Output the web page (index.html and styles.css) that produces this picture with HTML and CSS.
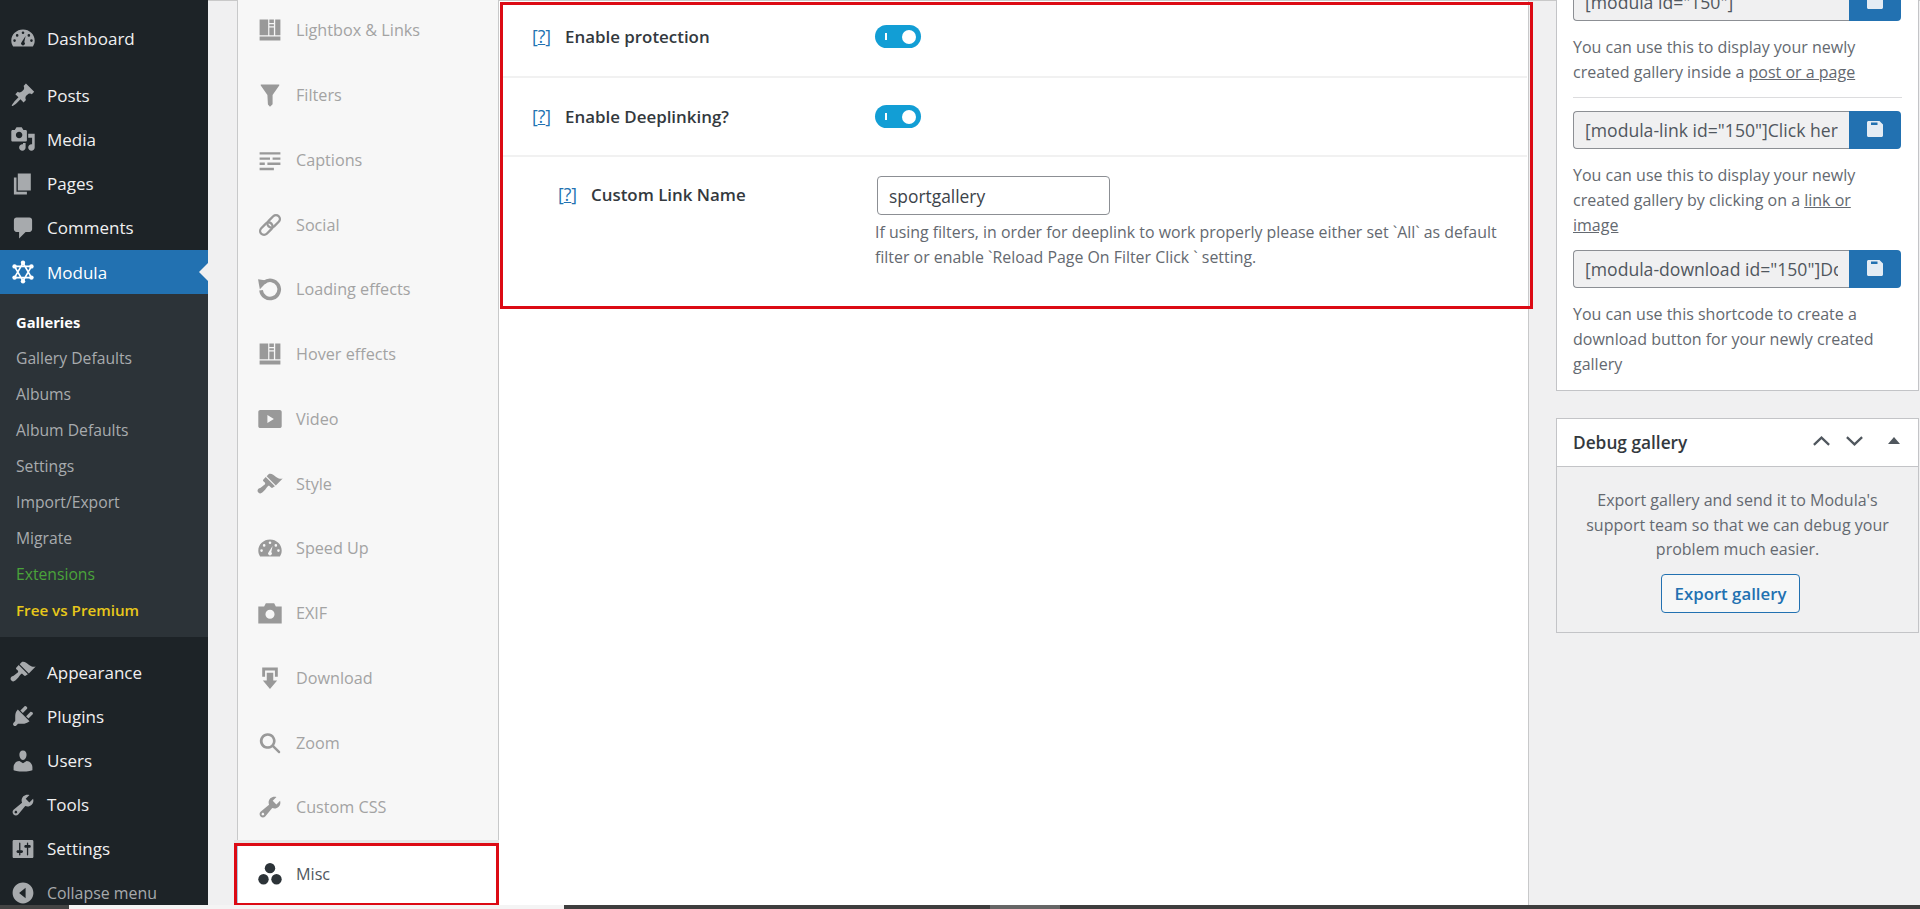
FILE: index.html
```html
<!DOCTYPE html>
<html lang="en">
<head>
  <meta charset="UTF-8">
  <title>Edit Gallery - Modula</title>
  <link rel="stylesheet" href="styles.css">
</head>
<body>
  <svg class="sprite" xmlns="http://www.w3.org/2000/svg">
    <symbol id="i-gauge" viewBox="0 0 20 20"><path fill-rule="evenodd" d="M10 3.500c-5 0-9 3.800-9 8.500 0 1.800.5 3.300 1.400 4.500h15.200c.9-1.200 1.400-2.700 1.400-4.500 0-4.700-4-8.500-9-8.500zM10 5a1 1 0 1 1 0 2 1 1 0 0 1 0-2zM5.500 7a1 1 0 1 1 0 2 1 1 0 0 1 0-2zm9 0a1 1 0 1 1 0 2 1 1 0 0 1 0-2zM3.500 11a1 1 0 1 1 0 2 1 1 0 0 1 0-2zm13 0a1 1 0 1 1 0 2 1 1 0 0 1 0-2zM12 8.500L11 13a1.500 1.500 0 1 1-2 0z"/></symbol>
    <symbol id="i-pin" viewBox="0 0 20 20"><path d="M10.440 3.020l1.820-1.820 6.360 6.350-1.830 1.820c-1.050-.68-2.480-.57-3.410.36l-.75.75c-.92.93-1.040 2.350-.35 3.410l-1.830 1.820-2.410-2.410-2.800 2.790c-.42.42-3.380 2.710-3.800 2.290s1.860-3.390 2.280-3.810l2.790-2.790L4.100 9.360l1.830-1.820c1.050.69 2.480.57 3.400-.36l.75-.75c.93-.92 1.050-2.350.36-3.410z"/></symbol>
    <symbol id="i-media" viewBox="0 0 20 20"><path fill-rule="evenodd" d="M13 11V4c0-.55-.45-1-1-1h-1.670L9 1H5L3.670 3H2c-.55 0-1 .45-1 1v7c0 .55.45 1 1 1h10c.55 0 1-.45 1-1zM7 4.500c1.380 0 2.500 1.120 2.500 2.500S8.380 9.500 7 9.500 4.500 8.380 4.500 7 5.620 4.500 7 4.500zM14 6h5v10.500c0 1.380-1.120 2.500-2.500 2.500S14 17.880 14 16.500s1.120-2.500 2.500-2.500c.17 0 .34.020.5.050V9h-3V6zm-4 8.050V13h2v3.500c0 1.380-1.120 2.500-2.500 2.500S7 17.880 7 16.500 8.120 14 9.500 14c.17 0 .34.020.5.050z"/></symbol>
    <symbol id="i-pages" viewBox="0 0 20 20"><path d="M6 15V2h10v13H6zm-1 1h8v2H3V5h2v11z"/></symbol>
    <symbol id="i-comment" viewBox="0 0 20 20"><path d="M5 2h10c1.100 0 2 .9 2 2v7c0 1.100-.9 2-2 2h-3l-5 5v-5H5c-1.100 0-2-.9-2-2V4c0-1.100.9-2 2-2z"/></symbol>
    <symbol id="i-modula" viewBox="0 0 20 20"><path fill="none" stroke="currentColor" stroke-width="1.300" d="M10 3l6.500 11.300h-13zM10 17L3.500 5.700h13z"/><circle cx="10" cy="2.800" r="1.700"/><circle cx="10" cy="17.200" r="1.700"/><circle cx="3.500" cy="5.700" r="1.700"/><circle cx="16.500" cy="5.700" r="1.700"/><circle cx="3.500" cy="14.300" r="1.700"/><circle cx="16.500" cy="14.300" r="1.700"/></symbol>
    <symbol id="i-brush" viewBox="0 0 20 20"><path d="M14.480 11.060L7.410 3.990l1.500-1.500c.5-.56 2.300-.47 3.510.32 1.210.8 1.430 1.280 2.910 2.100 1.180.64 2.450 1.260 4.450.85zm-.71.71L6.700 4.700 4.930 6.470c-.39.39-.39 1.020 0 1.410l1.060 1.060c.39.39.39 1.030 0 1.420-.6.6-1.430 1.110-2.210 1.690-.35.26-.7.53-1.010.84C1.430 13.230.4 14.080.4 15.130c0 .58.26 1.060.67 1.480.41.41.96.66 1.500.66 1.050 0 1.900-1.030 3.250-2.370.31-.31.58-.66.84-1.010.58-.78 1.090-1.610 1.690-2.210.39-.39 1.030-.39 1.420 0l1.060 1.060c.39.39 1.020.39 1.410 0z"/></symbol>
    <symbol id="i-plugin" viewBox="0 0 20 20"><path d="M13.110 4.360L9.870 7.600 8 5.730l3.240-3.240c.35-.34 1.050-.2 1.560.32.52.51.66 1.210.31 1.550zm-8 1.770l.91-1.120 9.010 9.010-1.190.84c-.71.71-2.630 1.160-3.820 1.160H6.140L4.900 17.260c-.59.59-1.540.59-2.120 0-.59-.58-.59-1.530 0-2.120l1.240-1.240v-3.880c0-1.130.4-3.190 1.090-3.890zm7.260 3.970l3.240-3.240c.34-.35 1.040-.21 1.550.31.52.51.66 1.210.31 1.550l-3.240 3.250z"/></symbol>
    <symbol id="i-user" viewBox="0 0 20 20"><path d="M10 9.250c-2.270 0-2.730-3.440-2.730-3.440C7 4.020 7.820 2 9.970 2c2.160 0 2.980 2.020 2.710 3.810 0 0-.41 3.440-2.680 3.440zm0 2.570L12.720 10c2.390 0 4.520 2.330 4.520 4.530v2.490s-3.650 1.130-7.240 1.130c-3.650 0-7.240-1.130-7.240-1.130v-2.490c0-2.250 1.940-4.480 4.470-4.480z"/></symbol>
    <symbol id="i-wrench" viewBox="0 0 20 20"><path fill-rule="evenodd" d="M16.680 9.770c-1.340 1.340-3.300 1.670-4.950.99l-5.410 6.520c-.99.99-2.590.99-3.580 0s-.99-2.590 0-3.570l6.520-5.420c-.68-1.650-.35-3.610.99-4.950 1.280-1.280 3.120-1.620 4.720-1.060l-2.890 2.890 2.820 2.820 2.860-2.870c.53 1.580.18 3.390-1.080 4.650zM3.810 16.210c.4.39 1.040.39 1.430 0 .4-.4.4-1.040 0-1.430-.39-.4-1.030-.4-1.430 0-.39.39-.39 1.030 0 1.430z"/></symbol>
    <symbol id="i-settings" viewBox="0 0 20 20"><path fill-rule="evenodd" d="M18 16V4c0-.55-.45-1-1-1H3c-.55 0-1 .45-1 1v12c0 .55.45 1 1 1h14c.55 0 1-.45 1-1zM8 11h1c.55 0 1 .45 1 1s-.45 1-1 1H8v1.500c0 .28-.22.5-.5.5s-.5-.22-.5-.5V13H6c-.55 0-1-.45-1-1s.45-1 1-1h1V5.500c0-.28.22-.5.5-.5s.5.22.5.5V11zm5-2h-1c-.55 0-1-.45-1-1s.45-1 1-1h1V5.500c0-.28.22-.5.5-.5s.5.22.5.5V7h1c.55 0 1 .45 1 1s-.45 1-1 1h-1v5.500c0 .28-.22.5-.5.5s-.5-.22-.5-.5V9z"/></symbol>
    <symbol id="i-collapse" viewBox="0 0 20 20"><path fill-rule="evenodd" d="M18 10c0-4.420-3.580-8-8-8s-8 3.580-8 8 3.580 8 8 8 8-3.580 8-8zm-6-4v8l-5-4z"/></symbol>
    <symbol id="i-grid" viewBox="0 0 20 20"><path d="M2 2h6.600v12H2zM9.500 2H13v2.600H9.500zM9.500 5.500H13v1.600H9.500zM9.500 8H13v6H9.500zM14 2h4v12h-4zM2 15h16v3H2z"/></symbol>
    <symbol id="i-filter" viewBox="0 0 20 20"><path d="M3.200 2h13.600c.3 0 .5.4.3.7L12 10v7.200L10 19l-1.600-1.600-.4-7.400L2.900 2.700c-.2-.3 0-.7.3-.7z"/></symbol>
    <symbol id="i-captions" viewBox="0 0 20 20"><path d="M2 4h16v1.800H2zM2 8h8v1.800H2zM12 8h6v1.800h-6zM2 12h4v1.800H2zM8 12h10v1.800H8zM2 16h11v1.800H2z"/></symbol>
    <symbol id="i-link" viewBox="0 0 20 20"><g fill="none" stroke="currentColor" stroke-width="1.800" transform="rotate(-45 10 10)"><rect x="0.500" y="7" width="11" height="6" rx="3"/><rect x="8.500" y="7" width="11" height="6" rx="3"/></g></symbol>
    <symbol id="i-refresh" viewBox="0 0 20 20"><path fill="none" stroke="currentColor" stroke-width="2.800" d="M5.500 5a7 7 0 1 1-2.400 6"/><path d="M.8 2.500l7.700 1.200-6.300 6.500z"/></symbol>
    <symbol id="i-video" viewBox="0 0 20 20"><path fill-rule="evenodd" d="M2.500 3h15c.8 0 1.500.7 1.500 1.500v11c0 .8-.7 1.500-1.500 1.500h-15c-.8 0-1.500-.7-1.500-1.500v-11C1 3.700 1.700 3 2.500 3zM8 7v6l5-3z"/></symbol>
    <symbol id="i-camera" viewBox="0 0 20 20"><path fill-rule="evenodd" d="M1 5h4.500l1.300-2.500h6.400L14.500 5H19v13H1zM10 7.500a3.500 3.500 0 1 0 0 7 3.500 3.500 0 0 0 0-7z"/></symbol>
    <symbol id="i-download" viewBox="0 0 20 20"><path d="M4 2h12v7h-2.200V4.200H6.200V9H4zM7.500 6h5v6h3L10 18.500 4.500 12h3z"/></symbol>
    <symbol id="i-search" viewBox="0 0 20 20"><path fill-rule="evenodd" d="M8.300 2.500a6 6 0 0 1 4.900 9.400l4.300 4.300c.5.500.5 1 .1 1.400s-.9.400-1.400-.1l-4.300-4.300A6 6 0 1 1 8.300 2.500zm0 2a4 4 0 1 0 0 8 4 4 0 0 0 0-8z"/></symbol>
    <symbol id="i-misc" viewBox="0 0 20 20"><circle cx="10" cy="5.500" r="4"/><circle cx="5" cy="14" r="4"/><circle cx="15" cy="14" r="4"/></symbol>
    <symbol id="i-copy" viewBox="0 0 16 16"><path fill-rule="evenodd" d="M1.500 0h11L16 3.500V14.500c0 .8-.7 1.500-1.500 1.500h-13C.7 16 0 15.300 0 14.500v-13C0 .7.7 0 1.500 0zM4 1.500V4h6.500V1.500z"/></symbol>
  </svg>

  <div class="screen">
    <div class="wp-body">
      <nav class="adminmenu">
        <a class="menu-item first"><svg class="menu-icon"><use href="#i-gauge"/></svg>Dashboard</a>
        <a class="menu-item spaced"><svg class="menu-icon"><use href="#i-pin"/></svg>Posts</a>
        <a class="menu-item"><svg class="menu-icon"><use href="#i-media"/></svg>Media</a>
        <a class="menu-item"><svg class="menu-icon"><use href="#i-pages"/></svg>Pages</a>
        <a class="menu-item"><svg class="menu-icon"><use href="#i-comment"/></svg>Comments</a>
        <a class="menu-item current"><svg class="menu-icon"><use href="#i-modula"/></svg>Modula</a>
        <ul class="submenu">
          <li class="sub-current">Galleries</li>
          <li>Gallery Defaults</li>
          <li>Albums</li>
          <li>Album Defaults</li>
          <li>Settings</li>
          <li>Import/Export</li>
          <li>Migrate</li>
          <li class="sub-green">Extensions</li>
          <li class="sub-yellow">Free vs Premium</li>
        </ul>
        <a class="menu-item spaced"><svg class="menu-icon"><use href="#i-brush"/></svg>Appearance</a>
        <a class="menu-item"><svg class="menu-icon"><use href="#i-plugin"/></svg>Plugins</a>
        <a class="menu-item"><svg class="menu-icon"><use href="#i-user"/></svg>Users</a>
        <a class="menu-item"><svg class="menu-icon"><use href="#i-wrench"/></svg>Tools</a>
        <a class="menu-item"><svg class="menu-icon"><use href="#i-settings"/></svg>Settings</a>
        <a class="menu-item collapse"><svg class="menu-icon"><use href="#i-collapse"/></svg>Collapse menu</a>
      </nav>

      <div class="content">
        <ul class="tabs">
          <li class="tab"><svg class="tab-icon"><use href="#i-grid"/></svg>Lightbox &amp; Links</li>
          <li class="tab"><svg class="tab-icon"><use href="#i-filter"/></svg>Filters</li>
          <li class="tab"><svg class="tab-icon"><use href="#i-captions"/></svg>Captions</li>
          <li class="tab"><svg class="tab-icon"><use href="#i-link"/></svg>Social</li>
          <li class="tab"><svg class="tab-icon"><use href="#i-refresh"/></svg>Loading effects</li>
          <li class="tab"><svg class="tab-icon"><use href="#i-grid"/></svg>Hover effects</li>
          <li class="tab"><svg class="tab-icon"><use href="#i-video"/></svg>Video</li>
          <li class="tab"><svg class="tab-icon"><use href="#i-brush"/></svg>Style</li>
          <li class="tab"><svg class="tab-icon"><use href="#i-gauge"/></svg>Speed Up</li>
          <li class="tab"><svg class="tab-icon"><use href="#i-camera"/></svg>EXIF</li>
          <li class="tab"><svg class="tab-icon"><use href="#i-download"/></svg>Download</li>
          <li class="tab"><svg class="tab-icon"><use href="#i-search"/></svg>Zoom</li>
          <li class="tab"><svg class="tab-icon"><use href="#i-wrench"/></svg>Custom CSS</li>
          <li class="tab tab-active"><svg class="tab-icon"><use href="#i-misc"/></svg>Misc</li>
        </ul>

        <main class="panel">
          <div class="fields">
            <div class="field">
              <div class="field-label"><a class="help">[<u>?</u>]</a>Enable protection</div>
              <span class="toggle"></span>
            </div>
            <div class="field">
              <div class="field-label"><a class="help">[<u>?</u>]</a>Enable Deeplinking?</div>
              <span class="toggle"></span>
            </div>
            <div class="field field-child">
              <div class="field-label"><a class="help">[<u>?</u>]</a>Custom Link Name</div>
              <div class="field-control">
                <input class="text-input" type="text" value="sportgallery">
                <p class="hint">If using filters, in order for deeplink to work properly please either set `All` as default filter or enable `Reload Page On Filter Click ` setting.</p>
              </div>
            </div>
          </div>
        </main>

        <aside class="side">
          <section class="box shortcode-box">
            <div class="shortcode"><input readonly value='[modula id="150"]'><button><svg class="copy-icon"><use href="#i-copy"/></svg></button></div>
            <p class="note">You can use this to display your newly created gallery inside a <u>post or a page</u></p>
            <hr class="rule">
            <div class="shortcode"><input readonly value='[modula-link id="150"]Click here[/modula-link]'><button><svg class="copy-icon"><use href="#i-copy"/></svg></button></div>
            <p class="note">You can use this to display your newly created gallery by clicking on a <u>link or image</u></p>
            <div class="shortcode"><input readonly value='[modula-download id="150"]Download[/modula-download]'><button><svg class="copy-icon"><use href="#i-copy"/></svg></button></div>
            <p class="note">You can use this shortcode to create a download button for your newly created gallery</p>
          </section>

          <section class="box debug-box">
            <header class="box-head">
              <h2>Debug gallery</h2>
              <svg class="head-icon up" viewBox="0 0 20 12"><path d="M2 10l8-7.500 8 7.500"/></svg>
              <svg class="head-icon down" viewBox="0 0 20 12"><path d="M2 2l8 7.500L18 2"/></svg>
              <span class="head-caret"></span>
            </header>
            <div class="box-body">
              <p>Export gallery and send it to Modula's support team so that we can debug your problem much easier.</p>
              <button class="export-btn">Export gallery</button>
            </div>
          </section>
        </aside>
      </div>
    </div>

    <div class="taskbar">
      <span class="task-start"></span>
      <span class="task-blank"></span>
      <span class="task-bar"></span>
      <span class="task-thumb"></span>
      <span class="task-rest"></span>
    </div>
  </div>
</body>
</html>
```

FILE: styles.css
```css
* {
  box-sizing: border-box;
}
html, body {
  margin: 0;
  padding: 0;
  height: 100%;
  overflow: hidden;
}
body {
  font-family: "Open Sans", "Liberation Sans", sans-serif;
  font-size: 16px;
  background-color: #f0f0f1;
  color: #3c434a;
}
ul {
  list-style: none;
  margin: 0;
  padding: 0;
}
p {
  margin: 0;
}
.sprite {
  display: none;
}
.screen {
  display: flex;
  flex-direction: column;
  height: 909px;
}
.wp-body {
  display: flex;
  height: 905px;
  flex: none;
}

/* admin menu */
.adminmenu {
  width: 208px;
  flex: none;
  background-color: #1d2327;
  overflow: hidden;
}
.menu-item {
  display: flex;
  align-items: center;
  position: relative;
  height: 44.2px;
  padding-left: 10px;
  color: #f0f0f1;
  font-size: 17px;
}
.menu-item.first {
  margin-top: 16px;
}
.menu-item.spaced {
  margin-top: 13px;
}
.menu-icon {
  width: 26px;
  height: 26px;
  margin-right: 11px;
  color: #a7aaad;
  fill: currentColor;
  flex: none;
}
.menu-item.current {
  background-color: #2271b1;
  color: #fff;
}
.menu-item.current .menu-icon {
  color: #fff;
}
.menu-item.current::after {
  content: "";
  position: absolute;
  right: 0;
  top: 13px;
  border: 9px solid transparent;
  border-right-color: #f0f0f1;
  border-left-width: 0;
}
.submenu {
  background-color: #2c3338;
  padding: 10px 0 7px;
  height: 343px;
  color: #a8abae;
  font-size: 15.700px;
}
.submenu li {
  height: 36px;
  line-height: 36px;
  padding-left: 16px;
}
.submenu .sub-current {
  color: #fff;
  font-size: 14.700px;
  font-weight: 700;
}
.submenu .sub-green {
  color: #4aa33a;
}
.submenu .sub-yellow {
  color: #e8c81a;
  font-size: 15.200px;
  font-weight: 600;
}
.menu-item.collapse {
  color: #a7aaad;
  font-size: 15.900px;
}

/* edit screen */
.content {
  flex: 1;
  display: flex;
  min-width: 0;
  padding-left: 29px;
  border-top: 1px solid #c9c9c9;
}
.tabs {
  width: 262px;
  flex: none;
  margin-top: -3px;
  background-color: #f7f7f7;
  border-left: 1px solid #c8c9ca;
  border-right: 1px solid #c8c9ca;
}
.tab {
  display: flex;
  align-items: center;
  height: 64.750px;
  padding-left: 19px;
  color: #a3a3a3;
  font-size: 16.200px;
}
.tab-icon {
  width: 26px;
  height: 26px;
  margin-right: 13px;
  color: #999;
  fill: currentColor;
  flex: none;
}
.tab-active {
  margin: 3px -1px 0 -4px;
  height: 63px;
  padding: 0 0 1px 20px;
  background-color: #fff;
  border: 3px solid #dc0a14;
  box-shadow: 0 -3px 0 #e6e6e6, inset 1px 0 0 #a9c8e0;
  color: #50575e;
}
.tab-active .tab-icon {
  color: #2c3338;
}
.panel {
  width: 1030px;
  flex: none;
  background-color: #fff;
  border-right: 1px solid #c8c9ca;
}
.fields {
  width: 1033px;
  height: 307px;
  margin-left: 1px;
  margin-top: 1px;
  border: 3px solid #dc0a14;
  position: relative;
}
.field {
  display: flex;
  height: 73px;
  padding: 0 0 8px 29px;
  align-items: center;
  border-bottom: 2px solid #f1f1f1;
  margin-right: 3px;
}
.field + .field {
  height: 79px;
  padding-bottom: 0;
}
.field-label {
  width: 343px;
  margin-top: -2px;
  color: #33393e;
  font-weight: 600;
  font-size: 16.900px;
}
.help {
  display: inline-block;
  width: 33px;
  color: #2271b1;
  font-size: 17.500px;
  font-weight: 400;
}
.toggle {
  display: block;
  position: relative;
  width: 46px;
  height: 23px;
  border-radius: 12px;
  background-color: #129ed5;
}
.toggle::before {
  content: "";
  position: absolute;
  left: 10px;
  top: 8px;
  width: 2px;
  height: 7px;
  background-color: #fff;
}
.toggle::after {
  content: "";
  position: absolute;
  right: 5px;
  top: 5px;
  width: 14px;
  height: 14px;
  border-radius: 50%;
  background-color: #fff;
}
.field.field-child {
  align-items: flex-start;
  height: auto;
  border-bottom: 0;
  padding: 19px 0 0 55px;
}
.field-child .field-label {
  width: 317px;
  margin-top: 6px;
}
.field-control {
  width: 640px;
}
.text-input {
  display: block;
  width: 233px;
  height: 39px;
  margin-left: 2px;
  padding: 0 11px;
  font: 400 17.400px "Open Sans", "Liberation Sans", sans-serif;
  color: #3c434a;
  background-color: #fff;
  border: 1px solid #8c8f94;
  border-radius: 4px;
}
.hint {
  margin-top: 5px;
  width: 636px;
  font-size: 15.900px;
  line-height: 25px;
  color: #646970;
}

/* right column */
.side {
  width: 363px;
  flex: none;
  margin-left: 27px;
}
.box {
  background-color: #fff;
  border: 1px solid #c3c4c7;
}
.shortcode-box {
  height: 391px;
  margin-top: -1px;
  padding: 0 16px;
  border-top: 0;
  overflow: hidden;
}
.shortcode {
  display: flex;
  height: 38px;
}
.shortcode:first-child {
  margin-top: -17px;
}
.shortcode input {
  width: 276px;
  height: 38px;
  padding: 0 11px;
  font: 400 17.600px "Open Sans", "Liberation Sans", sans-serif;
  color: #50575e;
  background-color: #f0f0f1;
  border: 1px solid #8c8f94;
  border-right: 0;
  border-radius: 4px 0 0 4px;
}
.shortcode button {
  width: 52px;
  height: 38px;
  padding: 0;
  background-color: #2271b1;
  border: 0;
  border-radius: 0 4px 4px 0;
  display: flex;
  align-items: center;
  justify-content: center;
}
.copy-icon {
  width: 16px;
  height: 16px;
  margin-top: -2px;
  fill: #e4ecf4;
}
.note {
  margin: 14px 0 12.500px;
  padding-right: 10px;
  font-size: 16px;
  line-height: 24.800px;
  color: #646970;
}
.rule {
  margin: 0 0 13px;
  border: 0;
  border-top: 1px solid #dcdcde;
}
.debug-box {
  margin-top: 27px;
  background-color: #f0f0f1;
}
.box-head {
  display: flex;
  align-items: center;
  height: 48px;
  padding-left: 16px;
  background-color: #fff;
  border-bottom: 1px solid #c3c4c7;
}
.box-head h2 {
  margin: 0;
  flex: 1;
  font-size: 17.300px;
  font-weight: 600;
  color: #33393e;
}
.head-icon {
  width: 19px;
  height: 12px;
  margin-top: -4px;
  fill: none;
  stroke: #50575e;
  stroke-width: 2.400;
  margin-right: 14px;
}
.head-icon.down {
  margin-right: 24px;
}
.head-caret {
  margin-top: -5px;
  border: 6px solid transparent;
  border-top: 0;
  border-bottom: 7px solid #50575e;
  margin-right: 18px;
}
.box-body {
  padding: 21px 16px 0;
  text-align: center;
  height: 165px;
}
.box-body p {
  font-size: 16px;
  line-height: 24.600px;
  color: #646970;
}
.export-btn {
  margin: 12px 14px 0 0;
  width: 139px;
  height: 39px;
  font: 600 16.800px "Open Sans", "Liberation Sans", sans-serif;
  color: #2271b1;
  background-color: #f6f7f7;
  border: 1px solid #2271b1;
  border-radius: 4px;
}

/* strip of the desktop under the window */
.taskbar {
  display: flex;
  height: 4px;
  flex: none;
  background-color: #3e3e3e;
}
.task-start {
  width: 69px;
  background-color: #444;
}
.task-blank {
  width: 495px;
  background-color: #f4f4f4;
}
.task-bar {
  width: 426px;
}
.task-thumb {
  width: 70px;
  background-color: #666;
}
.task-rest {
  flex: 1;
}
```
